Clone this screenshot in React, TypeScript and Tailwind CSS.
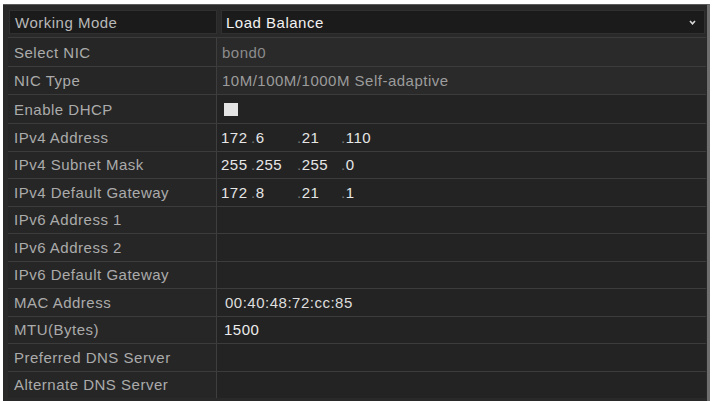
import React from "react";

type Row = {
  label: string;
  h: string;
  value?: React.ReactNode;
  dark?: boolean;
};

function Ip({ parts }: { parts: string[] }) {
  return (
    <div className="flex items-center text-[#e6e6e6]">
      <span className="w-[30px]">{parts[0]}</span>
      <span className="w-[46px]">
        <span className="text-[#777]">.</span>
        {parts[1]}
      </span>
      <span className="w-[44px]">
        <span className="text-[#777]">.</span>
        {parts[2]}
      </span>
      <span>
        <span className="text-[#777]">.</span>
        {parts[3]}
      </span>
    </div>
  );
}

export default function App() {
  const rows: Row[] = [
    { label: "Select NIC", h: "h-[29px]", value: <span className="text-[#8c8c8c] pl-[1px]">bond0</span> },
    {
      label: "NIC Type",
      h: "h-[28px]",
      value: <span className="text-[#9c9c9c] pl-[1px]">10M/100M/1000M Self-adaptive</span>,
    },
    {
      label: "Enable DHCP",
      h: "h-[29px]",
      dark: true,
      value: <div className="ml-[3px] w-[14px] h-[13px] bg-[#e4e4e4]" />,
    },
    { label: "IPv4 Address", h: "h-[27.5px]", dark: true, value: <Ip parts={["172", "6", "21", "110"]} /> },
    { label: "IPv4 Subnet Mask", h: "h-[27.5px]", dark: true, value: <Ip parts={["255", "255", "255", "0"]} /> },
    { label: "IPv4 Default Gateway", h: "h-[27.5px]", dark: true, value: <Ip parts={["172", "8", "21", "1"]} /> },
    { label: "IPv6 Address 1", h: "h-[27.5px]", dark: true },
    { label: "IPv6 Address 2", h: "h-[27.5px]", dark: true },
    { label: "IPv6 Default Gateway", h: "h-[27.5px]", dark: true },
    {
      label: "MAC Address",
      h: "h-[27.5px]",
      dark: true,
      value: <span className="text-[#dedede] pl-[4px]">00:40:48:72:cc:85</span>,
    },
    { label: "MTU(Bytes)", h: "h-[27.5px]", dark: true, value: <span className="text-[#ececec] pl-[3px]">1500</span> },
    { label: "Preferred DNS Server", h: "h-[27.5px]", dark: true },
    { label: "Alternate DNS Server", h: "h-[27.5px]", dark: true },
  ];

  return (
    <div className="w-[712px] h-[401px] bg-white pt-[4px] pl-[3px] pr-[2px] overflow-hidden font-['Liberation_Sans',Arial,sans-serif]">
      <div className="h-full bg-[#292929] border-t border-[#5a5a5a] border-r-[3px] border-r-[#6e6e6e] pl-[5px] pr-[1px] text-[15px] tracking-[0.5px] leading-none">
        <div className="pt-[5px] h-[32px] flex">
          <div className="w-[208px] ml-[1px] h-[24px] bg-[#1b1b1b] border border-[#303030] flex items-center pl-[5px] text-[#b8b8b8]">
            Working Mode
          </div>
          <div className="flex-1 ml-[4px] mr-[1px] h-[24px] bg-[#1b1b1b] border border-[#303030] flex items-center pl-[4px] pr-[8px] justify-between text-[#f2f2f2]">
            <span>Load Balance</span>
            <svg width="7" height="5" viewBox="0 0 7 5" className="mt-[1px]">
              <path d="M1 1 L3.5 3.8 L6 1" stroke="#d8d8d8" strokeWidth="1.6" fill="none" />
            </svg>
          </div>
        </div>
        {rows.map((r) => (
          <div key={r.label} className={`flex ${r.h} border-t border-[#3c3c3c]`}>
            <div className="w-[209px] flex items-center pl-[6px] text-[#ababab] border-r border-[#3e3e3e] bg-[#262626] whitespace-nowrap">
              {r.label}
            </div>
            <div className={`flex-1 flex items-center pl-[4px] ${r.dark ? "bg-[#232323]" : "bg-[#2a2a2a]"}`}>
              {r.value}
            </div>
          </div>
        ))}
      </div>
    </div>
  );
}
